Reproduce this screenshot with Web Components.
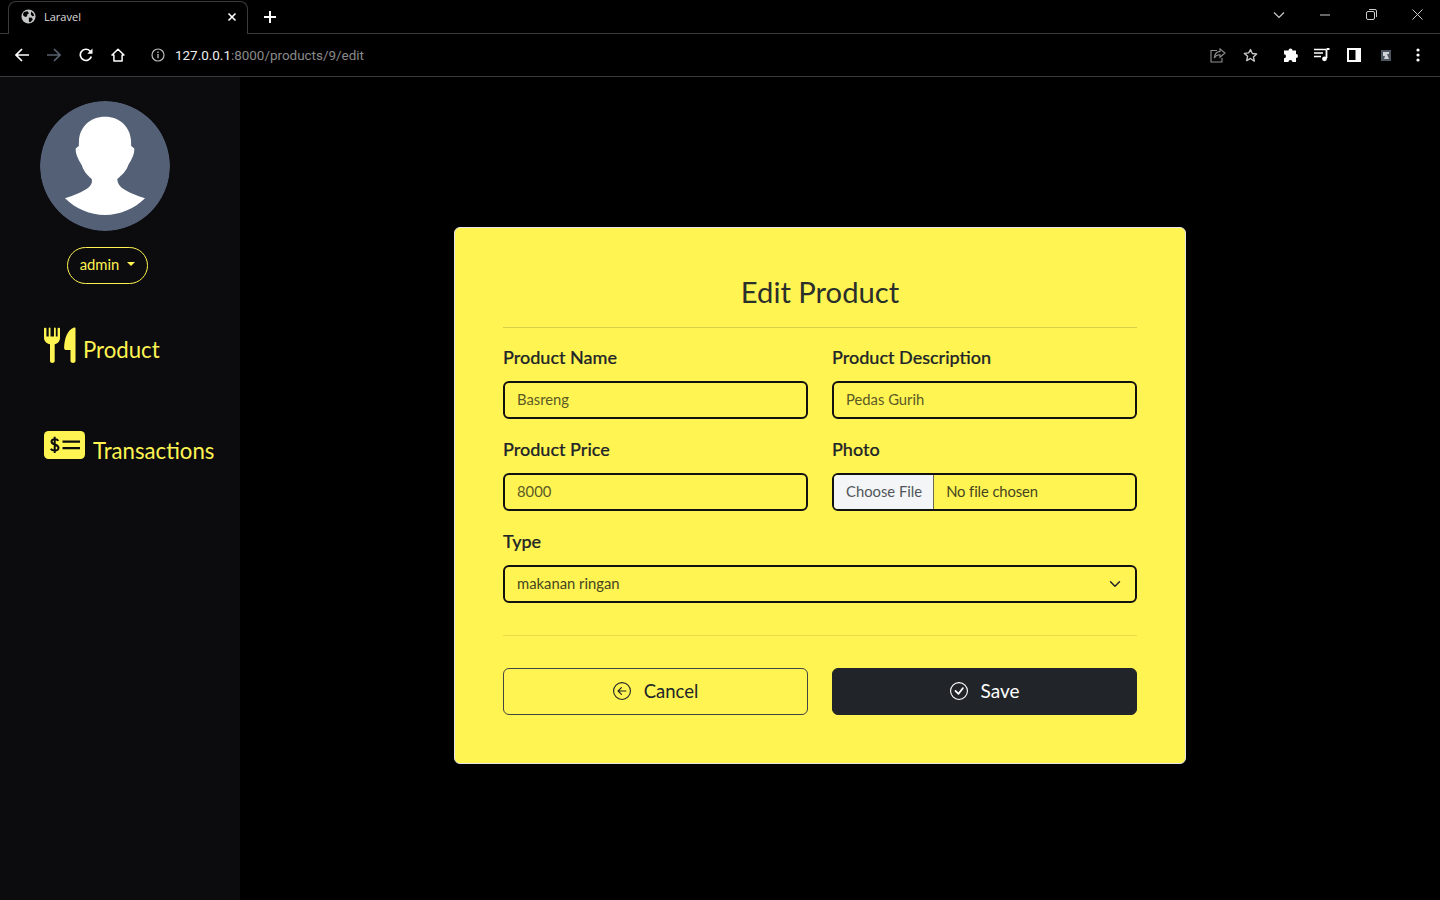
<!DOCTYPE html>
<html lang="en">
<head>
<meta charset="utf-8">
<title>Laravel</title>
<style>
    html, body { margin: 0; height: 100%; background: #000; overflow: hidden; }
    body { display: flex; flex-direction: column; font-family: "Lato", "Open Sans", sans-serif; }
    .app { flex: 1; display: flex; min-height: 0; }
</style>
</head>
<body>
<browser-chrome></browser-chrome>
<div class="app">
    <side-bar></side-bar>
    <edit-page>
        <form-field label="Product Name" value="Basreng"></form-field>
        <form-field label="Product Description" value="Pedas Gurih"></form-field>
        <form-field label="Product Price" value="8000"></form-field>
        <form-field label="Photo" kind="file" value="No file chosen"></form-field>
        <form-field label="Type" kind="select" value="makanan ringan" style="grid-column: 1 / -1"></form-field>
    </edit-page>
</div>

<script>
class BrowserChrome extends HTMLElement {
    connectedCallback() {
        this.attachShadow({ mode: 'open' });
        this.shadowRoot.innerHTML = `
            <style>
                :host { display: block; height: 77px; background: #000; color: #fff; font-family: "Open Sans", sans-serif; }
                svg { display: block; }
                .strip { height: 34px; box-sizing: border-box; display: flex; align-items: flex-end; padding-left: 8px; border-bottom: 1px solid #3b3b3b; }
                .tab {
                    position: relative; width: 240px; height: 33px; box-sizing: border-box; margin-bottom: -1px;
                    display: flex; align-items: center; padding: 0 10px 3px 12px; gap: 8px;
                    background: #000; border: 1px solid #3b3b3b; border-bottom: 0; border-radius: 8px 8px 0 0;
                    font-size: 11px;
                }
                .tab span { flex: 1; color: #dcdcdc; }
                .new { margin-left: 16px; margin-bottom: 10px; }
                .win { margin-left: auto; align-self: stretch; display: flex; align-items: center; padding-bottom: 4px; }
                .win div { width: 46px; display: flex; justify-content: center; }
                .bar { height: 43px; box-sizing: border-box; display: flex; align-items: center; padding: 0 6px; border-bottom: 1px solid #3b3b3b; }
                .btn { width: 32px; height: 32px; display: flex; align-items: center; justify-content: center; flex: none; }
                .addr { flex: 1; display: flex; align-items: center; gap: 10px; padding-left: 17px; font-family: "Roboto", sans-serif; font-size: 13.450px; color: #8a8a8a; }
                .addr b { font-weight: 400; color: #eee; }
                .gap { width: 8px; }
            </style>
            <div class="strip">
                <div class="tab">
                    <svg width="15" height="15" viewBox="0 0 16 16"><circle cx="8" cy="8" r="7.5" fill="#c4c7c5"/><path d="M3 3.2 7 2.5l1.5 2-2 1.6.2 1.5L4.4 8.6 2 6.5zM8.5 9l3.2.4.8 2-2.6 2.8-1.2-.4-.4-2.6zM11 2.6l2.4 2.4.6 2.4-2 .2-1.6-2z" fill="#000"/></svg>
                    <span>Laravel</span>
                    <svg width="10" height="10" viewBox="0 0 10 10"><path d="M1.5 1.5l7 7m0-7l-7 7" stroke="#fff" stroke-width="1.6"/></svg>
                </div>
                <svg class="new" width="12" height="12" viewBox="0 0 12 12"><path d="M6 0v12M0 6h12" stroke="#fff" stroke-width="2"/></svg>
                <div class="win">
                    <div><svg width="12" height="8" viewBox="0 0 12 8"><path d="M1 1.5l5 5 5-5" fill="none" stroke="#ccc" stroke-width="1.2"/></svg></div>
                    <div><svg width="10" height="2" viewBox="0 0 10 2"><path d="M0 1h10" stroke="#ccc" stroke-width="1"/></svg></div>
                    <div><svg width="11" height="11" viewBox="0 0 11 11"><rect x=".5" y="2.5" width="8" height="8" rx="1.5" fill="none" stroke="#ccc"/><path d="M3 .5h6a1.5 1.5 0 0 1 1.5 1.5v6" fill="none" stroke="#ccc"/></svg></div>
                    <div><svg width="11" height="11" viewBox="0 0 11 11"><path d="M.5.5l10 10m0-10l-10 10" stroke="#ccc"/></svg></div>
                </div>
            </div>
            <div class="bar">
                <div class="btn"><svg width="14" height="14" viewBox="0 0 14 14"><path d="M14 7H1.5M7 1 1 7l6 6" fill="none" stroke="#fff" stroke-width="1.7"/></svg></div>
                <div class="btn"><svg width="14" height="14" viewBox="0 0 14 14"><path d="M0 7h12.5M7 1l6 6-6 6" fill="none" stroke="#59616e" stroke-width="1.7"/></svg></div>
                <div class="btn"><svg width="14" height="14" viewBox="0 0 14 14"><path d="M12.3 8.500A5.600 5.600 0 1 1 11 3l1.500 1.500" fill="none" stroke="#fff" stroke-width="1.700"/><path d="M13.500.500v5.200H8.300z" fill="#fff"/></svg></div>
                <div class="btn"><svg width="14" height="14" viewBox="0 0 14 14"><path d="M7 1.300 1 7h1.900v6h8.200V7H13z" fill="none" stroke="#fff" stroke-width="1.500" stroke-linejoin="round"/></svg></div>
                <div class="addr">
                    <svg width="14" height="14" viewBox="0 0 14 14"><circle cx="7" cy="7" r="6" fill="none" stroke="#bbb" stroke-width="1.200"/><path d="M7 6v4.200M7 3.600v1.300" stroke="#bbb" stroke-width="1.300"/></svg>
                    <div><b>127.0.0.1</b>:8000/products/9/edit</div>
                </div>
                <div class="btn"><svg width="16" height="15" viewBox="0 0 16 15"><path d="M7 2.500H1v11.500h11V10" fill="none" stroke="#8f8f8f" stroke-width="1.100"/><path d="M10 .800 15 5l-5 4.200V6.800C7.500 6.800 5.500 7.800 4.300 10c.3-3.700 2.700-6.300 5.700-6.600z" fill="none" stroke="#8f8f8f" stroke-width="1.100"/></svg></div>
                <div class="btn"><svg width="15" height="15" viewBox="0 0 24 24"><path d="M12 2.500l2.900 6.300 6.900.8-5.100 4.700 1.400 6.800L12 16.700l-6.100 3.400 1.400-6.800-5.100-4.700 6.900-.8z" fill="none" stroke="#c8c8c8" stroke-width="2.200" stroke-linejoin="round"/></svg></div>
                <div class="gap"></div>
                <div class="btn"><svg width="15" height="15" viewBox="0 0 15 15"><path d="M5.500 2.500a2 2 0 0 1 4 0H13v3.400a2 2 0 0 1 0 4V14H9.400a2 2 0 0 0-4 0H1v-3.800a2 2 0 0 0 0-4V2.500z" fill="#fff"/></svg></div>
                <div class="btn"><svg width="16" height="14" viewBox="0 0 16 14"><path d="M0 1.500h12M0 5h9M0 8.500h7" stroke="#fff" stroke-width="1.500"/><path d="M12.500 1.500v8.700" stroke="#fff" stroke-width="1.800"/><path d="M12.500 1h3" stroke="#fff" stroke-width="2"/><circle cx="10.500" cy="10.800" r="2.400" fill="#fff"/></svg></div>
                <div class="btn"><svg width="14" height="14" viewBox="0 0 14 14"><path fill="#fff" fill-rule="evenodd" d="M0 0h14v14H0zM2 2v10h6.500V2z"/></svg></div>
                <div class="btn"><svg width="10" height="11" viewBox="0 0 10 11"><rect width="10" height="11" fill="#4c5560"/><path d="M2 2h6v2H6l2 5H3l1-3H2z" fill="#cfd3d8"/></svg></div>
                <div class="btn"><svg width="4" height="14" viewBox="0 0 4 14"><circle cx="2" cy="2" r="1.600" fill="#fff"/><circle cx="2" cy="7" r="1.600" fill="#fff"/><circle cx="2" cy="12" r="1.600" fill="#fff"/></svg></div>
            </div>
        `;
    }
}

class SideBar extends HTMLElement {
    connectedCallback() {
        this.attachShadow({ mode: 'open' });
        this.shadowRoot.innerHTML = `
            <style>
                :host { display: block; width: 240px; flex: none; box-sizing: border-box; padding: 24px 0 0 40px; background: #0c0c0f; color: #fff451; font-family: "Lato", sans-serif; }
                svg { display: block; flex: none; }
                .avatar { border-radius: 50%; }
                .pill {
                    margin: 16px 0 0 27px; width: 81px; height: 37px; box-sizing: border-box; padding-bottom: 3px;
                    display: flex; align-items: center; justify-content: center; gap: 8px;
                    border: 1px solid #fff451; border-radius: 19px; font-size: 14.800px;
                }
                .pill i { width: 0; height: 0; border: 4px solid transparent; border-top-color: #fff451; border-bottom: 0; margin-top: -1px; }
                .link { display: flex; align-items: flex-start; gap: 8px; margin-left: 4px; font-size: 22.200px; line-height: 28px; }
                .product { margin-top: 43px; gap: 7px; }
                .transactions { margin-top: 67px; }
                .transactions span { margin-top: 6px; }
                .product span { margin-top: 9px; }
            </style>
            <svg class="avatar" width="130" height="130" viewBox="0 0 130 130">
                <circle cx="65" cy="65" r="65" fill="#536076"/>
                <path fill="#fff" d="M65 15.700C50 15.700 40 26 39 39L38.800 45 35.700 47.500C35.400 53 38 58 41.700 64C43 69 47 74 51.700 78C52.500 82 51 84.500 48 87C42 91.500 33 94.500 25 97.300C36 108 50 114 65 114C80 114 94 108 105 97.300C97 94.500 88 91.500 82 87C79 84.500 77.500 82 77.300 78C82 74 87 69 88.300 64C92 58 94.600 53 94.300 47.500L91.200 45 91 39C90 26 80 15.700 65 15.700Z"/>
            </svg>
            <div class="pill">admin<i></i></div>
            <div class="link product">
                <svg width="32" height="36" viewBox="0 0 32 36">
                    <path fill="#fff451" d="M0 1.500C0 .500 2.400 .500 2.400 1.500V9.500H4.700V1.200C4.700 .200 6.500 .200 6.500 1.200V9.500H10V1.200C10 .200 11.800 .200 11.800 1.200V9.500H13.600V1.500C13.600 .500 16 .500 16 1.500V11C16 14.500 13.500 16.500 10.700 17.300V34C10.700 36.500 6 36.500 6 34V17.300C3 16.500 0 14.500 0 11Z"/>
                    <path fill="#fff451" d="M31.500 1.500V34C31.500 36.500 26.500 36.500 26.500 34V23H22.500C21 23 20 22 20.100 20.500C20.500 12 23 3 30 .500 31 .200 31.500 .700 31.500 1.500Z"/>
                </svg>
                <span>Product</span>
            </div>
            <div class="link transactions">
                <svg width="41" height="28" viewBox="0 0 41 28">
                    <rect width="41" height="28" rx="4.500" fill="#fff451"/>
                    <path d="M14.300 9.800C13.500 8 8 7.300 7.500 10.400 7 14.300 14.800 12.700 14.500 17 14.200 20.400 8 20 6.800 17.800M10.700 5.800V22" fill="none" stroke="#0c0c0f" stroke-width="2"/>
                    <path d="M18.500 10.700h17.500M18.500 17.200h17.500" stroke="#0c0c0f" stroke-width="2.200"/>
                </svg>
                <span>Transactions</span>
            </div>
        `;
    }
}

class FormField extends HTMLElement {
    connectedCallback() {
        const label = this.getAttribute('label');
        const value = this.getAttribute('value');
        const kind = this.getAttribute('kind');
        this.attachShadow({ mode: 'open' });
        const choose = kind === 'file' ? '<div class="choose">Choose File</div>' : '';
        const chevron = kind === 'select'
            ? '<svg width="12" height="12" viewBox="0 0 16 16"><path d="M2 5l6 6 6-6" fill="none" stroke="#212529" stroke-width="2" stroke-linecap="round" stroke-linejoin="round"/></svg>'
            : '';
        this.shadowRoot.innerHTML = `
            <style>
                :host { display: block; }
                label { display: block; height: 27px; line-height: 27px; margin-bottom: 10px; font-size: 18px; font-weight: 500; color: #212529; -webkit-text-stroke: .2px #212529; }
                .box {
                    height: 38px; box-sizing: border-box; display: flex; align-items: center; overflow: hidden;
                    border: 2px solid #111; border-radius: 6px; font-size: 14.800px; color: #5b5a26;
                }
                .value { flex: 1; padding: 0 12px 3px; }
                .choose { align-self: stretch; display: flex; align-items: center; padding: 0 11px 3px 12px; background: #f4f5f6; color: #50555b; border-right: 1px solid #6c6c50; }
                svg { margin-right: 14px; }
                :host([kind="select"]) .value { color: #45441f; }
                :host([kind="file"]) .value { color: #45441f; letter-spacing: -.1px; }
            </style>
            <label>${label}</label>
            <div class="box">${choose}<div class="value">${value}</div>${chevron}</div>
        `;
    }
}

class EditPage extends HTMLElement {
    connectedCallback() {
        this.attachShadow({ mode: 'open' });
        this.shadowRoot.innerHTML = `
            <style>
                :host { display: block; flex: 1; box-sizing: border-box; padding: 150px 0 0 214px; background: #000; font-family: "Lato", sans-serif; }
                .card {
                    width: 732px; height: 537px; box-sizing: border-box; padding: 40px 48px 0;
                    background: #fff451; border: 1px solid #e4e4e4; border-radius: 6px; color: #212529;
                }
                h1 { margin: 0; height: 60px; box-sizing: border-box; text-align: center; font-size: 29.200px; line-height: 48px; font-weight: 400; color: #2b2f2c; border-bottom: 1px solid #d9cf4e; }
                .fields { display: grid; grid-template-columns: 305px 305px; column-gap: 24px; row-gap: 17px; padding-top: 16px; }
                .foot { margin-top: 32px; padding-top: 32px; border-top: 1px solid #e5db4c; display: grid; grid-template-columns: 305px 305px; column-gap: 24px; }
                .btn {
                    height: 47px; box-sizing: border-box; display: flex; align-items: center; justify-content: center; gap: 13px; padding-bottom: 2px;
                    border: 1px solid #444; border-radius: 6px; font-size: 18.500px;
                }
                .save { background: #212529; border-color: #212529; color: #fff; font-size: 19px; }
            </style>
            <div class="card">
                <h1>Edit Product</h1>
                <div class="fields"><slot></slot></div>
                <div class="foot">
                    <div class="btn">
                        <svg width="18" height="18" viewBox="0 0 16 16" fill="#212529"><path fill-rule="evenodd" d="M1 8a7 7 0 1 0 14 0A7 7 0 0 0 1 8zm15 0A8 8 0 1 1 0 8a8 8 0 0 1 16 0zm-4.500-.500a.500.500 0 0 1 0 1H5.707l2.147 2.146a.500.500 0 0 1-.708.708l-3-3a.500.500 0 0 1 0-.708l3-3a.500.500 0 1 1 .708.708L5.707 7.500H11.500z"/></svg>
                        Cancel
                    </div>
                    <div class="btn save">
                        <svg width="18" height="18" viewBox="0 0 16 16" fill="#fff"><path d="M8 15A7 7 0 1 1 8 1a7 7 0 0 1 0 14zm0 1A8 8 0 1 0 8 0a8 8 0 0 0 0 16z"/><path d="M10.970 4.970a.235.235 0 0 0-.020.022L7.477 9.417 5.384 7.323a.750.750 0 0 0-1.060 1.060L6.970 11.030a.750.750 0 0 0 1.079-.020l3.992-4.990a.750.750 0 0 0-1.071-1.050z"/></svg>
                        Save
                    </div>
                </div>
            </div>
        `;
    }
}

customElements.define('browser-chrome', BrowserChrome);
customElements.define('side-bar', SideBar);
customElements.define('form-field', FormField);
customElements.define('edit-page', EditPage);
</script>
</body>
</html>
